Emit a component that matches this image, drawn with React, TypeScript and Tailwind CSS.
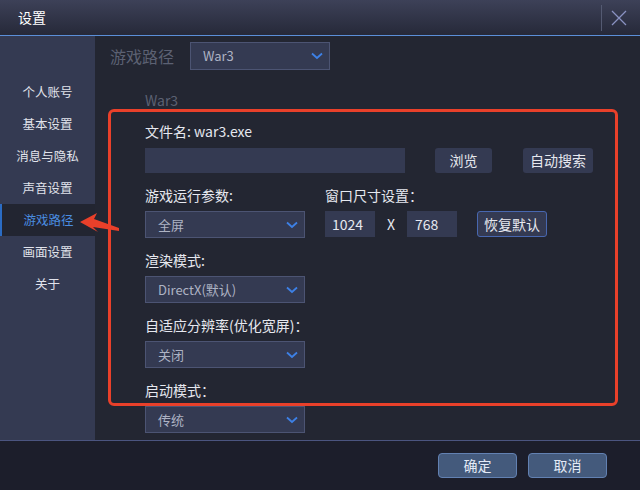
import React from "react";

const navItems = ["个人账号", "基本设置", "消息与隐私", "声音设置", "游戏路径", "画面设置", "关于"];

function Chevron() {
  return (
    <svg width="12" height="8" viewBox="0 0 12 8" className="shrink-0">
      <path d="M1 1.5 L6 6 L11 1.5" fill="none" stroke="#3d80e6" strokeWidth="1.8" />
    </svg>
  );
}

function Select({ value, width }: { value: string; width: string }) {
  return (
    <div
      className={`${width} h-[27px] flex items-center justify-between pl-[12px] pr-[6px] bg-[#343a52] border border-[#4c5473] text-[13px] text-[#aeb3c4]`}
    >
      <span>{value}</span>
      <Chevron />
    </div>
  );
}

function Label({ children }: { children: React.ReactNode }) {
  return <div className="h-[38px] pt-[13px] leading-[18px] text-[14px] text-[#e6e8ef] whitespace-nowrap">{children}</div>;
}

export default function App() {
  return (
    <div
      className="relative w-[640px] h-[490px] flex flex-col bg-[#232632] overflow-hidden"
      style={{ fontFamily: '"Noto Sans CJK SC", "Noto Sans", sans-serif' }}
    >
      {/* title bar */}
      <div className="h-[36px] flex items-center bg-gradient-to-b from-[#3d4158] to-[#262939] border-b border-[#5b8fd9]">
        <div className="pl-[18px] text-[14px] text-white flex-1">设置</div>
        <div className="w-px h-[26px] bg-[#545a72] mr-[9px]" />
        <svg width="16" height="16" viewBox="0 0 16 16" className="mr-[13px]">
          <path d="M1 1 L15 15 M15 1 L1 15" stroke="#8a92c2" strokeWidth="1.3" />
        </svg>
      </div>

      {/* body */}
      <div className="flex h-[404px]">
        <div className="w-[95px] bg-[#343a52] pt-[40px] flex flex-col">
          {navItems.map((item) => {
            const active = item === "游戏路径";
            return (
              <div
                key={item}
                className={`h-[32px] flex items-center justify-center text-[12.5px] ${
                  active ? "bg-[#222531] text-[#4a8de0] border-l-2 border-[#2b6cc4]" : "text-[#e1e3eb]"
                }`}
              >
                {item}
              </div>
            );
          })}
        </div>

        <div className="flex-1 pt-[6px] pl-[15px]">
          <div className="flex items-center gap-[16px]">
            <span className="text-[16px] text-[#5c6173]">游戏路径</span>
            <div className="w-[140px] h-[28px] flex items-center justify-between pl-[12px] pr-[6px] bg-[#343a52] border border-[#4c5473] text-[13px] text-[#aeb3c4]">
              <span>War3</span>
              <Chevron />
            </div>
          </div>

          <div className="ml-[35px]">
            <div className="mt-[21px] h-[18px] leading-[18px] text-[14px] text-[#5c6173]">War3</div>
            <div className="mt-[13px] h-[18px] leading-[18px] text-[14px] text-[#e6e8ef]">文件名: war3.exe</div>

            <div className="mt-[8px] flex h-[25px]">
              <div className="w-[260px] bg-[#343a52]" />
              <button className="ml-[30px] w-[57px] rounded-[3px] bg-[#343a52] text-[14px] text-[#e6e8ef]">浏览</button>
              <button className="ml-[31px] w-[70px] rounded-[3px] bg-[#343a52] text-[14px] text-[#e6e8ef]">自动搜索</button>
            </div>

            <div className="flex gap-[20px]">
              <div className="w-[160px]">
                <Label>游戏运行参数:</Label>
                <Select value="全屏" width="w-[160px]" />
                <Label>渲染模式:</Label>
                <Select value="DirectX(默认)" width="w-[160px]" />
                <Label>自适应分辨率(优化宽屏)：</Label>
                <Select value="关闭" width="w-[160px]" />
                <Label>启动模式：</Label>
                <Select value="传统" width="w-[160px]" />
              </div>
              <div>
                <Label>窗口尺寸设置：</Label>
                <div className="flex items-center h-[26px] text-[14px] text-[#e6e8ef]">
                  <div className="w-[50px] h-[26px] bg-[#343a52] flex items-center pl-[7px]">1024</div>
                  <div className="w-[32px] text-center">X</div>
                  <div className="w-[50px] h-[26px] bg-[#343a52] flex items-center pl-[8px]">768</div>
                  <button className="ml-[20px] w-[70px] h-[26px] rounded-[3px] bg-[#343a52] border border-[#4867b0]">
                    恢复默认
                  </button>
                </div>
              </div>
            </div>
          </div>
        </div>
      </div>

      {/* footer */}
      <div className="flex-1 flex items-center justify-end gap-[11px] pr-[33px] bg-[#1c1e2b] border-t border-[#4b5580]">
        <button className="w-[79px] h-[25px] rounded-[4px] bg-[#445a7c] border border-[#6281b2] text-[14px] text-[#e3eaf6]">确定</button>
        <button className="w-[79px] h-[25px] rounded-[4px] bg-[#445a7c] border border-[#6281b2] text-[14px] text-[#e3eaf6]">取消</button>
      </div>

      {/* red annotation */}
      <div className="absolute left-[108px] top-[109px] w-[510px] h-[297px] border-[3px] border-[#e9402a] rounded-[6px] pointer-events-none" />
      <svg className="absolute left-[78px] top-[208px]" width="44" height="26" viewBox="0 0 44 26">
        <polygon points="2,14 19,5 16,11 41,20 41,23 15,19 20,24" fill="#e9402a" />
      </svg>
    </div>
  );
}
